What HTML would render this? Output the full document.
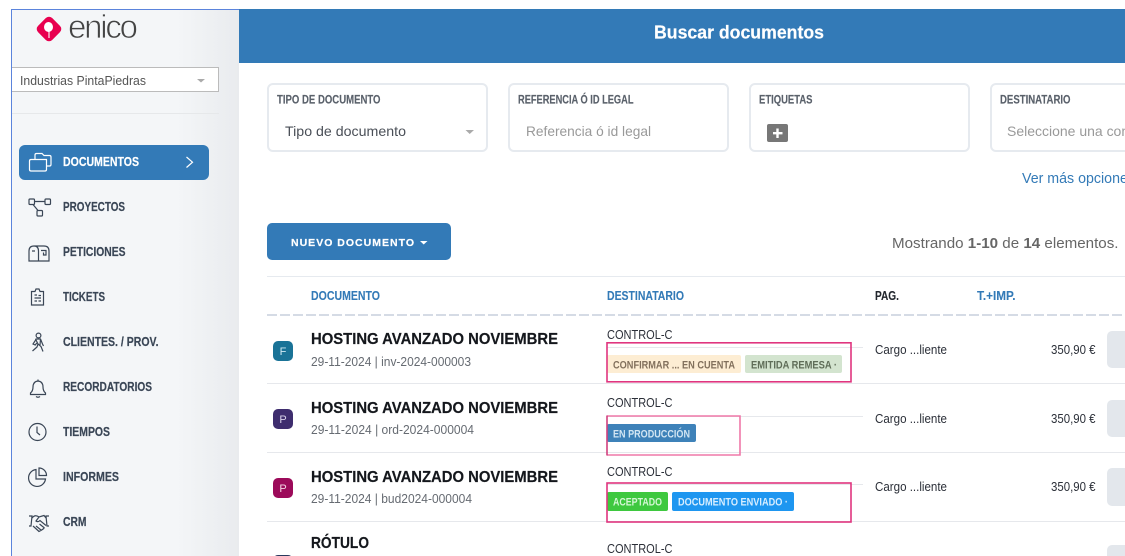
<!DOCTYPE html>
<html lang="es"><head><meta charset="utf-8"><title>Buscar documentos</title>
<style>
html,body{margin:0;padding:0;background:#fff;width:1125px;height:556px;overflow:hidden}
svg{display:block;font-family:"Liberation Sans",sans-serif}
.n{font-size:12.5px;font-weight:700;fill:#3a4656;stroke:#3a4656;stroke-width:.2}
.l{font-size:11.5px;font-weight:700;fill:#5a616b;stroke:#5a616b;stroke-width:.15}
.h{font-size:12.5px;font-weight:700;fill:#337ab7;stroke:#337ab7;stroke-width:.1}
.t{font-size:15.5px;font-weight:700;fill:#14171c;stroke:#14171c;stroke-width:.2}
.s{font-size:12.5px;fill:#666b72}
.c{font-size:12.5px;fill:#2b2f38}
.b{font-size:11px;font-weight:700}
.i{fill:none;stroke:#3a4656;stroke-width:1.2}
</style></head><body>
<svg width="1125" height="556" viewBox="0 0 1125 556" xmlns="http://www.w3.org/2000/svg">
<defs>
<linearGradient id="sb" x1="0" x2="1" y1="0" y2="0"><stop offset="0" stop-color="#f4f6f8"/><stop offset=".72" stop-color="#f4f6f8"/><stop offset="1" stop-color="#e9ebee"/></linearGradient>
</defs>
<rect width="1125" height="556" fill="#fff"/>
<!-- sidebar -->
<rect x="12" y="10" width="227" height="546" fill="url(#sb)"/>
<rect x="11" y="9" width="1" height="547" fill="#5b84dc"/>
<rect x="11" y="9" width="228" height="1" fill="#5b84dc"/>
<!-- header -->
<rect x="239" y="9" width="886" height="54" fill="#337ab7"/>
<text x="654" y="38.500" font-size="18.500" font-weight="700" fill="#fff" stroke="#fff" stroke-width=".2" textLength="170" lengthAdjust="spacingAndGlyphs">Buscar documentos</text>
<!-- logo -->
<rect x="39" y="19" width="20" height="20" rx="4.500" transform="rotate(45 49 29)" fill="#e8004f"/>
<ellipse cx="48.500" cy="27" rx="4.500" ry="5" fill="#fff"/>
<path d="M49 31 L49 38" stroke="#fff" stroke-width="1.100"/>
<text x="68" y="38" font-size="33" fill="#444" stroke="#f4f6f8" stroke-width=".8" textLength="70" lengthAdjust="spacing">enico</text>
<!-- company select -->
<rect x="12" y="67.500" width="206.500" height="24" fill="#fff"/>
<path d="M12 67.500 H218.500 V91.500 H12" fill="none" stroke="#bbb"/>
<text x="20" y="85" font-size="13" fill="#555" textLength="126" lengthAdjust="spacingAndGlyphs">Industrias PintaPiedras</text>
<path d="M197 79 H205 L201 82.500 Z" fill="#aaa"/>
<rect x="12" y="113" width="207" height="1" fill="#e6e8ea"/>
<!-- nav -->
<rect x="19" y="145" width="190" height="35" rx="6" fill="#337ab7"/>
<g fill="none" stroke="#fff" stroke-width="1.200">
<path d="M35 159 V155 Q35 153.500 36.500 153.500 H42 L44 155.500 H49.500 Q51 155.500 51 157 V164.500 Q51 166 49.500 166 H46.500"/>
<path d="M31 159.500 H46.500 V169.500 Q46.500 171 45 171 H31 Q29.500 171 29.500 169.500 V161 Q29.500 159.500 31 159.500 Z"/>
<path d="M186.500 157 L192.500 162.200 L186.500 167.500"/>
</g>
<text x="63" y="166" class="n" style="fill:#fff;stroke:#fff" textLength="76" lengthAdjust="spacingAndGlyphs">DOCUMENTOS</text>
<g class="i">
<rect x="29" y="199" width="5.500" height="5.500" rx="1"/><rect x="45" y="199" width="5.500" height="5.500" rx="1"/><rect x="37" y="210.500" width="5.500" height="5.500" rx="1"/><path d="M34.500 201.500 H45 M33 204.500 L38 210.500"/>
<path d="M29 261 V251 Q29 246 34 246 H44 Q49 246 49 251 V261 Z M34 246 Q38.500 246 38.500 251 V261 M32 251 H35 M41 250.500 H46 V255 H43.500 V252.500"/>
<path d="M31.500 291.500 H35 L36 289 H39 L40 291.500 H43.500 V305 H31.500 Z M34.500 295 H37 M38.500 295.500 H41 M34.500 298 H41 M34.500 301 H37 M38.500 301 H41"/>
<circle cx="38.500" cy="335.500" r="2.400"/><path d="M35.500 339 L40.500 339 L42.500 344 L43.500 346 M36 339.500 L33 344 L35.200 345 L36.800 343 M38 344 L37 347 L32.500 351 M38 344 L41 346.500 L43 351.500 M35.500 339 L38 344 M40.500 339 L40 345"/>
<path d="M38 379.500 V381 Q33 381.500 33 387 Q33 391 30.500 393 V394.500 H45.500 V393 Q43 391 43 387 Q43 381.500 38 381 M36 396.500 Q38 398 40 396.500"/>
<circle cx="37.500" cy="432" r="8.500"/><path d="M37 426.500 V432.500 L40 435"/>
<path d="M36 469.500 A8.500 8.500 0 1 0 45.500 479 H36 Z M39 468 A7.500 7.500 0 0 1 46.500 475.500 H39 Z"/>
<path d="M29 516 H32 L31 526 H29 M49 516 H46 L47 526 H49 M32 518 Q35 514 39 517 L44 515.500 L46 518 M39 517 L36 521 Q38 522.500 40 520.500 L46 525.500 M33 526 L39 531.500 Q42 530 44.500 528 M36 526 L41 530 M39.500 524 L44.500 528"/>
</g>
<text x="63" y="211" class="n" textLength="62" lengthAdjust="spacingAndGlyphs">PROYECTOS</text>
<text x="63" y="256" class="n" textLength="62.500" lengthAdjust="spacingAndGlyphs">PETICIONES</text>
<text x="63" y="301" class="n" textLength="42" lengthAdjust="spacingAndGlyphs">TICKETS</text>
<text x="63" y="346" class="n" textLength="95.500" lengthAdjust="spacingAndGlyphs">CLIENTES. / PROV.</text>
<text x="63" y="391" class="n" textLength="89" lengthAdjust="spacingAndGlyphs">RECORDATORIOS</text>
<text x="63" y="436" class="n" textLength="47" lengthAdjust="spacingAndGlyphs">TIEMPOS</text>
<text x="63" y="481" class="n" textLength="56" lengthAdjust="spacingAndGlyphs">INFORMES</text>
<text x="63" y="526" class="n" textLength="23.500" lengthAdjust="spacingAndGlyphs">CRM</text>
<!-- filters -->
<g fill="#fff" stroke="#e6eaef" stroke-width="2">
<rect x="268" y="84" width="219" height="67" rx="5"/><rect x="509" y="84" width="219" height="67" rx="5"/><rect x="750" y="84" width="219" height="67" rx="5"/><rect x="991" y="84" width="219" height="67" rx="5"/>
</g>
<text x="277" y="103.500" class="l" textLength="103.500" lengthAdjust="spacingAndGlyphs">TIPO DE DOCUMENTO</text>
<text x="518" y="103.500" class="l" textLength="115.500" lengthAdjust="spacingAndGlyphs">REFERENCIA Ó ID LEGAL</text>
<text x="759" y="103.500" class="l" textLength="53.500" lengthAdjust="spacingAndGlyphs">ETIQUETAS</text>
<text x="1000" y="103.500" class="l" textLength="70.500" lengthAdjust="spacingAndGlyphs">DESTINATARIO</text>
<text x="285" y="136" font-size="14" fill="#4a4f57" textLength="121" lengthAdjust="spacingAndGlyphs">Tipo de documento</text>
<path d="M465.500 130 H474 L469.700 134 Z" fill="#aaa"/>
<text x="526" y="136" font-size="14" fill="#999" textLength="125" lengthAdjust="spacingAndGlyphs">Referencia ó id legal</text>
<rect x="767" y="124" width="21" height="18" rx="2" fill="#777"/>
<path d="M777.500 128.500 V138 M773 133.200 H782.500" stroke="#fff" stroke-width="2.400"/>
<text x="1007" y="136" font-size="14" fill="#999" textLength="126" lengthAdjust="spacingAndGlyphs">Seleccione una com</text>
<text x="1022" y="183" font-size="14.500" fill="#337ab7" textLength="113" lengthAdjust="spacingAndGlyphs">Ver más opciones</text>
<!-- toolbar -->
<rect x="267" y="223" width="184" height="37" rx="5" fill="#337ab7"/>
<text x="291" y="246" font-size="10.500" font-weight="700" fill="#fff" stroke="#fff" stroke-width=".2" textLength="123" lengthAdjust="spacing">NUEVO DOCUMENTO</text>
<path d="M420 241 H427.500 L423.700 244.500 Z" fill="#fff"/>
<text x="892" y="248" font-size="14.500" fill="#666" textLength="226.500" lengthAdjust="spacingAndGlyphs">Mostrando <tspan font-weight="700">1-10</tspan> de <tspan font-weight="700">14</tspan> elementos.</text>
<rect x="267" y="276" width="858" height="1" fill="#e6eaef"/>
<!-- table head -->
<text x="311" y="300" class="h" textLength="69" lengthAdjust="spacingAndGlyphs">DOCUMENTO</text>
<text x="607" y="300" class="h" textLength="77" lengthAdjust="spacingAndGlyphs">DESTINATARIO</text>
<text x="875" y="300" class="h" style="fill:#23272e;stroke:#23272e" textLength="24" lengthAdjust="spacingAndGlyphs">PAG.</text>
<text x="977" y="300" class="h" textLength="38.500" lengthAdjust="spacingAndGlyphs">T.+IMP.</text>
<path d="M267 315 H1125" stroke="#d5dbe5" stroke-width="2" stroke-dasharray="10 3"/>
<!-- row lines -->
<g fill="#e6e8ec">
<rect x="267" y="383" width="858" height="1"/><rect x="267" y="452" width="858" height="1"/><rect x="267" y="521" width="858" height="1"/>
<rect x="607" y="347" width="256" height="1"/><rect x="607" y="416" width="256" height="1"/><rect x="607" y="484" width="256" height="1"/>
</g>
<!-- type icons -->
<rect x="273" y="341" width="20" height="20" rx="5" fill="#1a7397"/>
<text x="283" y="355" font-size="11" fill="#cfe8f2" text-anchor="middle">F</text>
<rect x="273" y="409" width="20" height="20" rx="5" fill="#3e2d6e"/>
<text x="283" y="423" font-size="11" fill="#d9d3ea" text-anchor="middle">P</text>
<rect x="273" y="478" width="20" height="20" rx="5" fill="#9c0a5a"/>
<text x="283" y="492" font-size="11" fill="#f3d3e3" text-anchor="middle">P</text>
<rect x="273" y="555" width="20" height="20" rx="5" fill="#2a3a5e"/>
<!-- titles -->
<text x="311" y="344" class="t" textLength="247" lengthAdjust="spacingAndGlyphs">HOSTING AVANZADO NOVIEMBRE</text>
<text x="311" y="366" class="s" textLength="160" lengthAdjust="spacingAndGlyphs">29-11-2024 | inv-2024-000003</text>
<text x="311" y="413" class="t" textLength="247" lengthAdjust="spacingAndGlyphs">HOSTING AVANZADO NOVIEMBRE</text>
<text x="311" y="434" class="s" textLength="163" lengthAdjust="spacingAndGlyphs">29-11-2024 | ord-2024-000004</text>
<text x="311" y="482" class="t" textLength="247" lengthAdjust="spacingAndGlyphs">HOSTING AVANZADO NOVIEMBRE</text>
<text x="311" y="503" class="s" textLength="161" lengthAdjust="spacingAndGlyphs">29-11-2024 | bud2024-000004</text>
<text x="311" y="548" class="t" textLength="58" lengthAdjust="spacingAndGlyphs">RÓTULO</text>
<!-- recipients -->
<text x="607" y="339" class="c" textLength="65.500" lengthAdjust="spacingAndGlyphs">CONTROL-C</text>
<text x="607" y="407" class="c" textLength="65.500" lengthAdjust="spacingAndGlyphs">CONTROL-C</text>
<text x="607" y="476" class="c" textLength="65.500" lengthAdjust="spacingAndGlyphs">CONTROL-C</text>
<text x="607" y="553" class="c" textLength="65.500" lengthAdjust="spacingAndGlyphs">CONTROL-C</text>
<!-- badges -->
<rect x="607" y="355" width="134" height="18" rx="2" fill="#fdedd3"/>
<text x="613" y="368.500" class="b" fill="#82705c" textLength="122" lengthAdjust="spacingAndGlyphs">CONFIRMAR ... EN CUENTA</text>
<rect x="745" y="355" width="97" height="18" rx="2" fill="#d3e4cf"/>
<text x="751" y="368.500" class="b" fill="#5f6d58" textLength="86" lengthAdjust="spacingAndGlyphs">EMITIDA REMESA ·</text>
<rect x="607" y="424" width="89" height="18" rx="2" fill="#3e82b9"/>
<text x="613" y="437.500" class="b" fill="#d3e6f3" textLength="77" lengthAdjust="spacingAndGlyphs">EN PRODUCCIÓN</text>
<rect x="607" y="492" width="61" height="19" rx="2" fill="#3ec83f"/>
<text x="613" y="505.500" class="b" fill="#d5f7d5" textLength="49" lengthAdjust="spacingAndGlyphs">ACEPTADO</text>
<rect x="672" y="492" width="122" height="19" rx="2" fill="#1e96f0"/>
<text x="678" y="505.500" class="b" fill="#d8eeff" textLength="110" lengthAdjust="spacingAndGlyphs">DOCUMENTO ENVIADO ·</text>
<!-- pink highlights -->
<g fill="none" stroke-width="1.600">
<rect x="607" y="342.800" width="244" height="39" stroke="#e0357f"/>
<path d="M607 416 H740 V455 H607" stroke="#ef78a8"/>
<path d="M607 415.500 V455.500" stroke="#d0407f"/>
<rect x="607" y="483" width="244" height="39" stroke="#e0357f"/>
</g>
<!-- pay + amount -->
<text x="875" y="354" class="c" textLength="72" lengthAdjust="spacingAndGlyphs">Cargo ...liente</text>
<text x="875" y="423" class="c" textLength="72" lengthAdjust="spacingAndGlyphs">Cargo ...liente</text>
<text x="875" y="491" class="c" textLength="72" lengthAdjust="spacingAndGlyphs">Cargo ...liente</text>
<text x="1051" y="354" class="c" textLength="44.500" lengthAdjust="spacingAndGlyphs">350,90 €</text>
<text x="1051" y="423" class="c" textLength="44.500" lengthAdjust="spacingAndGlyphs">350,90 €</text>
<text x="1051" y="491" class="c" textLength="44.500" lengthAdjust="spacingAndGlyphs">350,90 €</text>
<g fill="#e3e7ec">
<rect x="1107" y="331" width="40" height="37" rx="5"/><rect x="1107" y="400" width="40" height="37" rx="5"/><rect x="1107" y="468" width="40" height="38" rx="5"/><rect x="1107" y="545" width="40" height="38" rx="5"/>
</g>
</svg>
</body></html>
